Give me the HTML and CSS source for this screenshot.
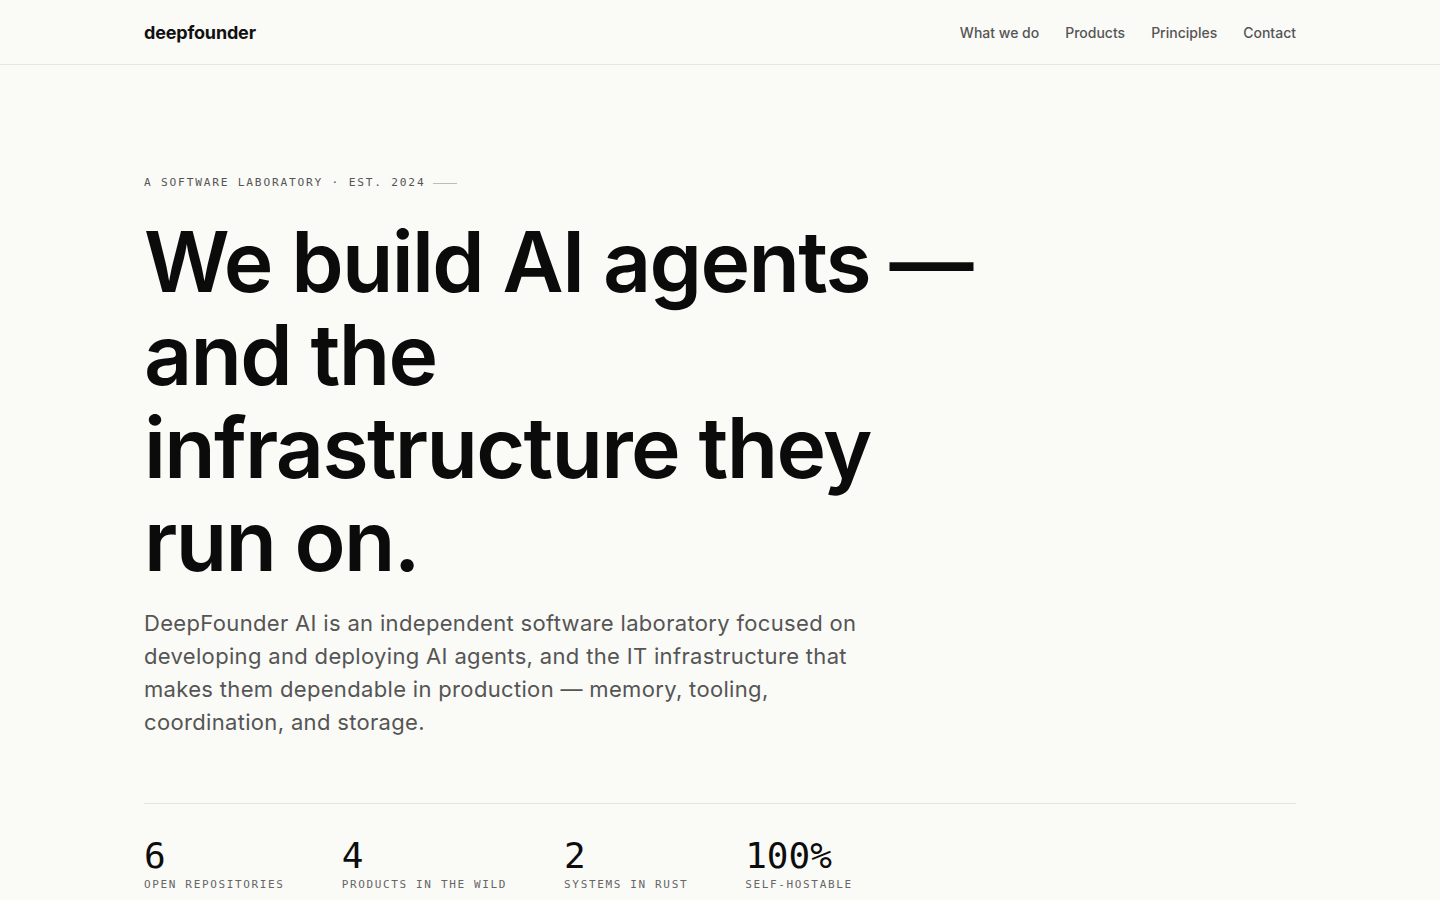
FILE: index.html
```html
<!DOCTYPE html>
<html lang="en">
<head>
<meta charset="utf-8">
<title>deepfounder</title>
<link rel="stylesheet" href="styles.css">
</head>
<body>
<header class="site-header">
  <div class="container header-inner">
    <a class="logo" href="#">deepfounder</a>
    <nav class="nav">
      <a href="#">What we do</a>
      <a href="#">Products</a>
      <a href="#">Principles</a>
      <a href="#">Contact</a>
    </nav>
  </div>
</header>
<main class="container hero">
  <p class="eyebrow"><span>A SOFTWARE LABORATORY · EST. 2024</span><span class="eyebrow-line"></span></p>
  <h1 class="title">We build AI agents —<br>and the<br>infrastructure they<br>run on.</h1>
  <p class="lead">DeepFounder AI is an independent software laboratory focused on developing and deploying AI agents, and the IT infrastructure that makes them dependable in production — memory, tooling, coordination, and storage.</p>
  <div class="stats">
    <div class="stat"><div class="stat-num">6</div><div class="stat-label">OPEN REPOSITORIES</div></div>
    <div class="stat"><div class="stat-num">4</div><div class="stat-label">PRODUCTS IN THE WILD</div></div>
    <div class="stat"><div class="stat-num">2</div><div class="stat-label">SYSTEMS IN RUST</div></div>
    <div class="stat"><div class="stat-num">100%</div><div class="stat-label">SELF-HOSTABLE</div></div>
  </div>
</main>
</body>
</html>
```
FILE: styles.css
```css
* { box-sizing: border-box; }
html, body { margin: 0; padding: 0; }
body {
  background: #fafaf7;
  color: #0d0d0d;
  font-family: Inter, "Noto Sans", sans-serif;
}
a { color: inherit; text-decoration: none; }
.container {
  max-width: 1152px;
  margin: 0 auto;
}
.site-header {
  border-bottom: 1px solid #e6e6e1;
}
.header-inner {
  height: 64px;
  display: flex;
  align-items: center;
  justify-content: space-between;
}
.logo {
  font-size: 18px;
  font-weight: 700;
  letter-spacing: -0.01em;
  color: #111;
}
.nav {
  display: flex;
  gap: 26px;
}
.nav a {
  font-size: 14px;
  color: #555;
  font-weight: 500;
}
.hero {
  padding-top: 110px;
}
.eyebrow {
  margin: 0;
  display: flex;
  align-items: center;
  gap: 8px;
  font-family: "DejaVu Sans Mono", monospace;
  font-size: 11.2px;
  line-height: 16px;
  letter-spacing: 0.16em;
  color: #555;
}
.eyebrow-line {
  width: 24px;
  height: 1px;
  background: #bdbdb8;
}
.title {
  margin: 24px 0 0;
  font-size: 84px;
  line-height: 93px;
  font-weight: 600;
  letter-spacing: -0.02em;
  color: #0b0b0b;
}
.lead {
  margin: 20px 0 0;
  max-width: 730px;
  font-size: 22px;
  line-height: 33px;
  letter-spacing: 0.015em;
  color: #555;
}
.stats {
  margin-top: 64px;
  border-top: 1px solid #e3e3de;
  padding-top: 32px;
  display: flex;
  gap: 57px;
}
.stat-num {
  font-family: "DejaVu Sans Mono", monospace;
  font-size: 36px;
  line-height: 40px;
  color: #0d0d0d;
}
.stat-label {
  margin-top: 1px;
  font-family: "DejaVu Sans Mono", monospace;
  font-size: 11px;
  line-height: 16px;
  letter-spacing: 0.15em;
  color: #666;
}
```
